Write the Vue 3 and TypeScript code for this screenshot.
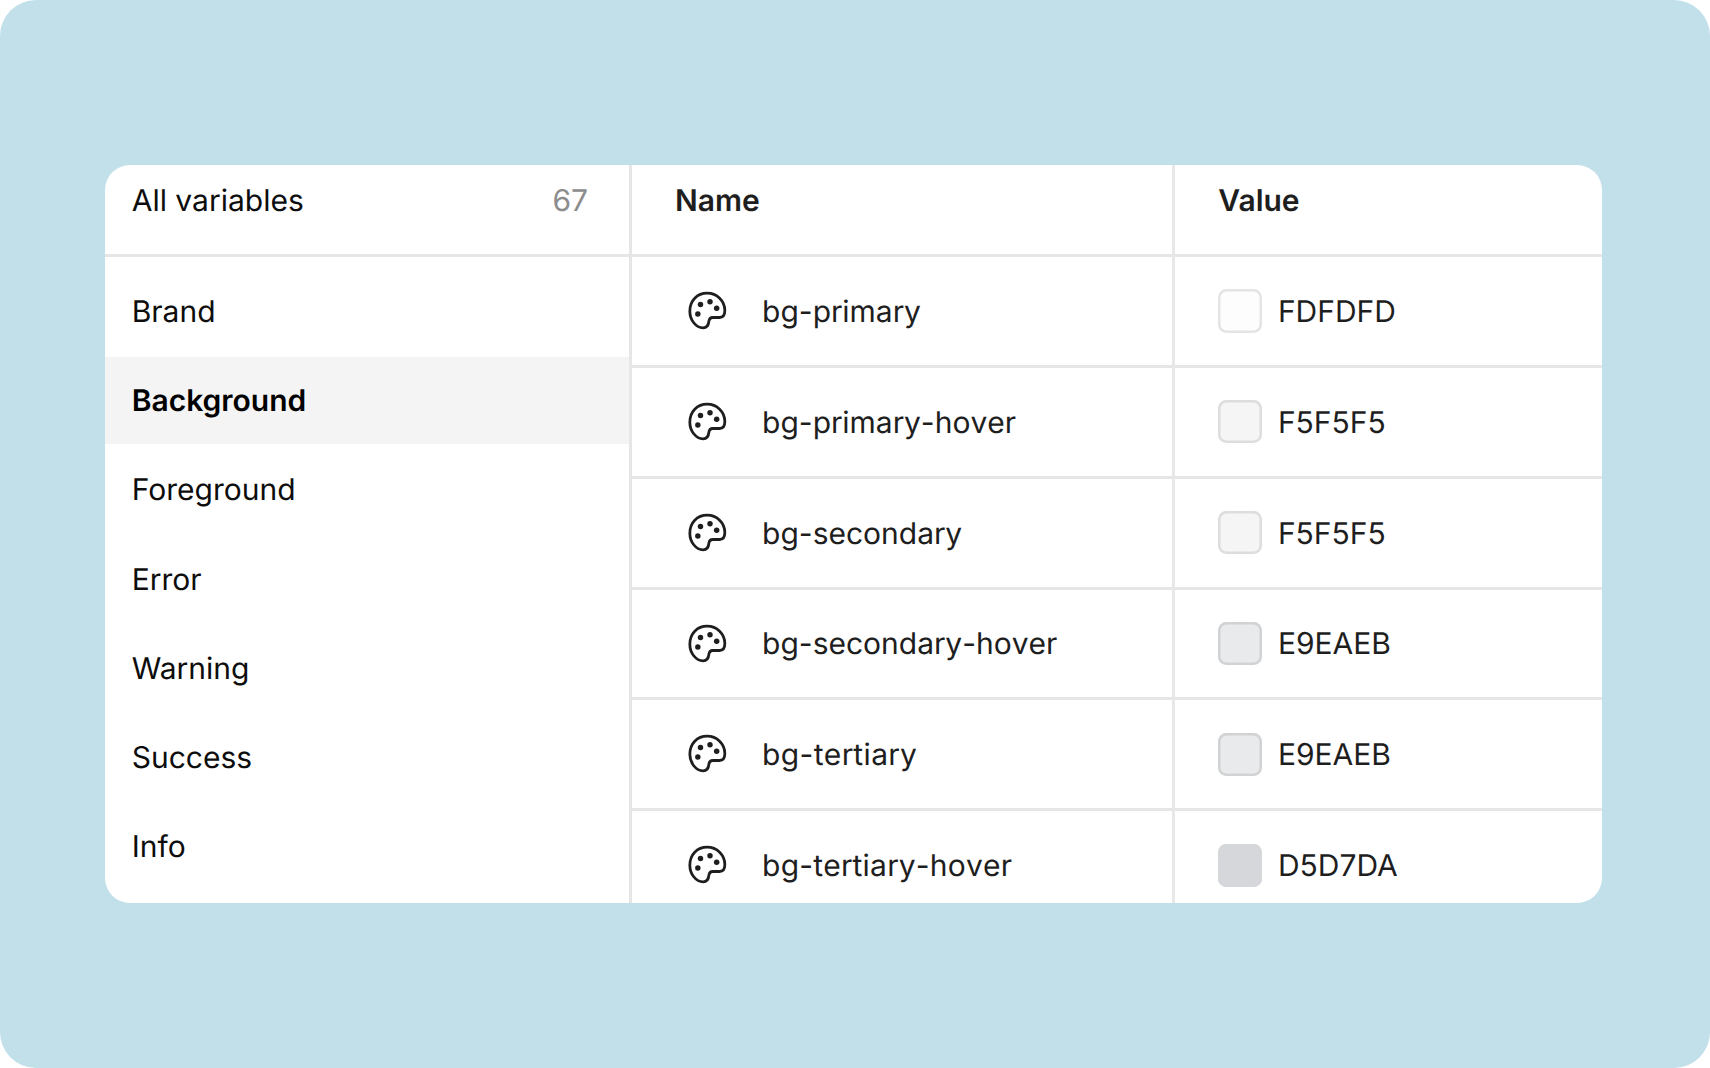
<script setup lang="ts">
interface Variable {
  name: string
  value: string
  border: string
  tracking: number
}

const groups: string[] = ['Brand', 'Background', 'Foreground', 'Error', 'Warning', 'Success', 'Info']
const activeGroup = 'Background'

const variables: Variable[] = [
  { name: 'bg-primary', value: 'FDFDFD', border: '#e4e4e4', tracking: 0 },
  { name: 'bg-primary-hover', value: 'F5F5F5', border: '#dddddd', tracking: 0 },
  { name: 'bg-secondary', value: 'F5F5F5', border: '#dddddd', tracking: 0 },
  { name: 'bg-secondary-hover', value: 'E9EAEB', border: '#d1d2d3', tracking: 0 },
  { name: 'bg-tertiary', value: 'E9EAEB', border: '#d1d2d3', tracking: 0.35 },
  { name: 'bg-tertiary-hover', value: 'D5D7DA', border: '#d5d7da', tracking: 0.22 },
]
</script>

<template>
  <main class="stage">
    <section class="panel">
      <aside class="sidebar">
        <header class="sidebar-head">
          <span>All variables</span>
          <span class="count">67</span>
        </header>
        <nav class="groups">
          <div v-for="g in groups" :key="g" class="group" :class="{ active: g === activeGroup }">{{ g }}</div>
        </nav>
      </aside>
      <div class="table">
        <div class="row head">
          <div class="cell name-cell">Name</div>
          <div class="cell value-cell">Value</div>
        </div>
        <div v-for="v in variables" :key="v.name" class="row">
          <div class="cell name-cell">
            <svg class="palette" viewBox="51.5 47.5 120 120" fill="none">
              <path
                d="M112 54C141 54 165 77 165 106C165 119 160 127 149 127H129C121 127 118 131 117 139C116 150 112 158 100 158C78 158 60 134 60 108C60 76 82 54 112 54Z"
                stroke="#1e1e1e"
                stroke-width="8.3"
              />
              <g fill="#1e1e1e">
                <circle cx="92" cy="88" r="8.2" />
                <circle cx="120.5" cy="79.5" r="8.2" />
                <circle cx="140.5" cy="99.5" r="8.2" />
                <circle cx="84" cy="116.5" r="8.2" />
              </g>
            </svg>
            <span class="label name" :style="{ letterSpacing: v.tracking + 'px' }">{{ v.name }}</span>
          </div>
          <div class="cell value-cell">
            <i class="swatch" :style="{ background: '#' + v.value, color: v.border }"></i>
            <span class="label">{{ v.value }}</span>
          </div>
        </div>
      </div>
    </section>
  </main>
</template>

<style>
body {
  margin: 0;
  background: #fff;
}
</style>

<style scoped>
.stage {
  box-sizing: border-box;
  width: 1710px;
  height: 1068px;
  padding: 165px 108px 165px 105px;
  border-radius: 36px;
  background: #c2e0ea;
  font-family: Inter, 'Liberation Sans', sans-serif;
  font-size: 30px;
  line-height: 44px;
  text-rendering: geometricPrecision;
  color: #1e1e1e;
}
.panel {
  display: flex;
  height: 738px;
  border-radius: 25px;
  background: #fff;
  overflow: hidden;
}
.sidebar {
  flex: none;
  width: 524px;
  color: #0d0d0d;
}
.sidebar-head {
  box-sizing: border-box;
  display: flex;
  justify-content: space-between;
  height: 92px;
  padding: 14px 41px 0 26.7px;
  border-bottom: 3px solid #e6e6e6;
}
.count {
  color: #8c8c8c;
}
.groups {
  display: flex;
  flex-direction: column;
  gap: 2.8px;
  padding-top: 11px;
}
.group {
  box-sizing: border-box;
  flex: none;
  height: 86.4px;
  padding: 1px 0 0 26.7px;
  line-height: 86.4px;
}
.group.active {
  background: #f4f4f4;
  font-weight: 600;
  color: #000;
}
.table {
  flex: 1;
}
.row {
  box-sizing: border-box;
  display: flex;
  height: 110.86px;
}
.head {
  height: 89px;
  font-weight: 600;
}
.cell {
  box-sizing: border-box;
  display: flex;
  align-items: center;
  border-top: 3px solid #e6e6e6;
  border-left: 3px solid #e6e6e6;
}
.name-cell {
  width: 543px;
  padding-left: 55.3px;
}
.value-cell {
  flex: 1;
  border-left-color: #e8e8e8;
  padding-left: 43.3px;
}
.head .cell {
  align-items: flex-start;
  border-top: 0;
  padding-top: 14px;
}
.head .name-cell {
  padding-left: 43px;
}
.palette {
  flex: none;
  width: 40px;
  height: 40px;
  margin-right: 34.8px;
}
.label {
  padding-top: 1.8px;
}
.name {
  font-kerning: none;
}
.swatch {
  flex: none;
  width: 43.3px;
  height: 43.3px;
  margin-right: 16.3px;
  border-radius: 8.5px;
  box-shadow: inset 0 0 0 2.5px currentColor;
}
</style>
